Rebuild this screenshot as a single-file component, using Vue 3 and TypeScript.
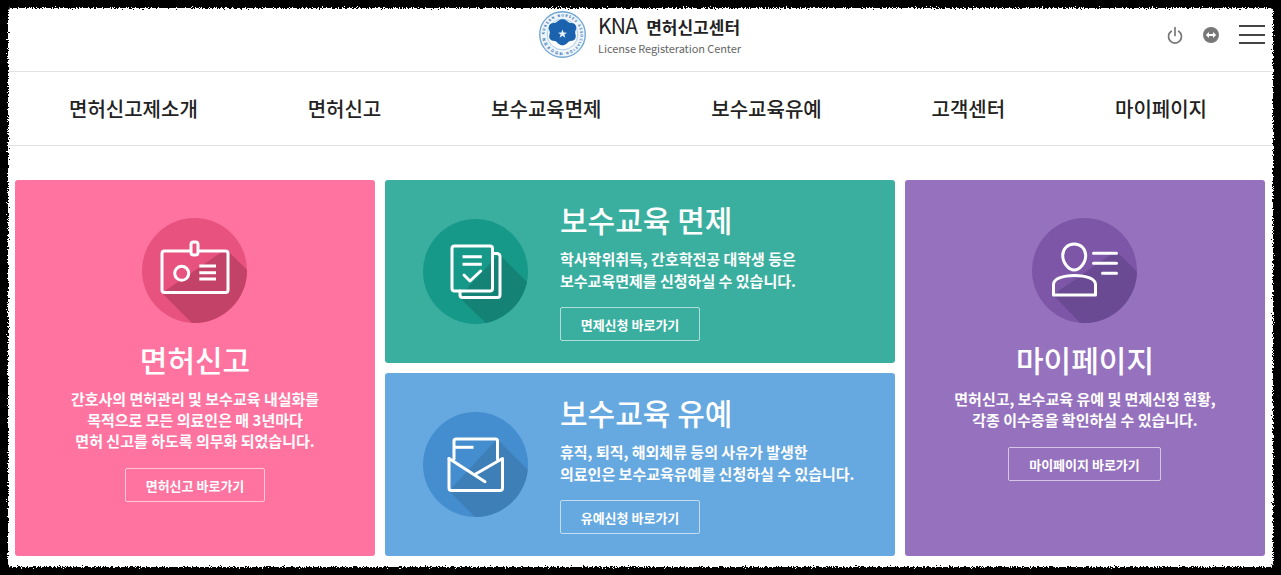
<script setup lang="ts">
const navItems: string[] = ['면허신고제소개', '면허신고', '보수교육면제', '보수교육유예', '고객센터', '마이페이지']
</script>

<template>
  <div class="screen">
    <svg class="defs" width="0" height="0" aria-hidden="true">
      <defs>
        <filter id="rough" x="-2%" y="-3%" width="104%" height="106%">
          <feTurbulence type="fractalNoise" baseFrequency="0.7" numOctaves="2" seed="4" result="n" />
          <feDisplacementMap in="SourceGraphic" in2="n" scale="6" xChannelSelector="R" yChannelSelector="G" />
        </filter>
      </defs>
    </svg>
    <div class="paper"></div>
    <div class="page">
      <header class="top">
        <div class="brand">
          <svg class="seal" width="47" height="47" viewBox="0 0 46 46">
            <defs>
              <path id="sealArc" d="M5.500 23a17.500 17.500 0 1 1 35 0a17.500 17.500 0 1 1-35 0" />
            </defs>
            <circle cx="23" cy="23" r="22.300" fill="#eef5fb" stroke="#6ea6d4" stroke-width="1.300" />
            <circle cx="23" cy="23" r="15" fill="#fff" stroke="#8bb7dc" stroke-width=".7" />
            <text class="seal-text"><textPath href="#sealArc" textLength="106">KOREAN NURSES ASSOCIATION 대한간호협회</textPath></text>
            <g transform="translate(23 22.500) scale(1.150) translate(-23 -23)">
              <path d="M23 10.500c3 0 4.600 2.400 5.600 2.800 1.700.7 4.700.3 5.800 2.600 1 2.200-.6 4.300-.6 5.700 0 1.500 1.300 3.700-.1 5.600-1.300 1.800-3.800 1.300-5.200 2.100-1.400.9-2.400 3.200-5.500 3.200s-4.100-2.300-5.500-3.200c-1.400-.8-3.900-.3-5.200-2.100-1.400-1.900-.1-4.100-.1-5.600 0-1.400-1.600-3.500-.6-5.700 1.100-2.300 4.100-1.900 5.800-2.600 1-.4 2.600-2.800 5.600-2.800z" fill="#1b63ae" />
            </g>
            <path d="M23 18l1.100 3.100 3.300.1-2.600 1.900 1 3.100-2.800-1.900-2.800 1.900 1-3.100-2.600-1.900 3.300-.1z" fill="#e9f1f9" />
          </svg>
          <div class="brand-text">
            <div class="brand-title"><span class="brand-en">KNA</span><span class="brand-ko">면허신고센터</span></div>
            <div class="brand-sub">License Registeration Center</div>
          </div>
        </div>
        <div class="tools">
          <svg width="16" height="18" viewBox="0 0 16 18" fill="none" stroke="#777" stroke-width="1.700" stroke-linecap="round">
            <path d="M8 1.500v8" />
            <path d="M4.300 5.200a6.500 6.500 0 1 0 7.400 0" />
          </svg>
          <svg width="16" height="16" viewBox="0 0 16 16">
            <circle cx="8" cy="8" r="8" fill="#777" />
            <path d="M2.800 8l3.200-3v2.100h4V5l3.200 3-3.200 3V8.900H6V11z" fill="#fff" />
          </svg>
          <div class="burger"><i></i><i></i><i></i></div>
        </div>
      </header>

      <nav class="menu">
        <a v-for="item in navItems" :key="item">{{ item }}</a>
      </nav>

      <main class="grid">
        <section class="card side pink">
          <svg class="badge" width="105" height="105" viewBox="0 0 105 105" fill="none">
            <clipPath id="c1"><circle cx="52.500" cy="52.500" r="52.500" /></clipPath>
            <circle cx="52.500" cy="52.500" r="52.500" fill="#e8527e" />
            <path clip-path="url(#c1)" d="M84 31l40 40-50 50H66L20 75z" fill="#c34267" />
            <g stroke="#fff" stroke-width="3">
              <rect x="20" y="33" width="66" height="41.500" rx="2.500" />
              <rect x="49" y="24" width="7" height="13" rx="2.500" fill="#e8527e" />
              <circle cx="39.700" cy="55.300" r="7" />
              <path d="M57.300 48H74M57.300 54.700H74M57.300 61H74" />
            </g>
          </svg>
          <h2>면허신고</h2>
          <p>간호사의 면허관리 및 보수교육 내실화를<br />목적으로 모든 의료인은 매 3년마다<br />면허 신고를 하도록 의무화 되었습니다.</p>
          <a class="btn">면허신고 바로가기</a>
        </section>

        <section class="card wide teal">
          <svg class="badge" width="105" height="105" viewBox="0 0 105 105" fill="none">
            <clipPath id="c2"><circle cx="52.500" cy="52.500" r="52.500" /></clipPath>
            <circle cx="52.500" cy="52.500" r="52.500" fill="#17998a" />
            <path clip-path="url(#c2)" d="M76 35l50 50-40 40H84L36 78z" fill="#148376" />
            <g stroke="#fff" stroke-width="3" stroke-linecap="round" stroke-linejoin="round">
              <rect x="29" y="27" width="40.500" height="45" rx="2.500" />
              <path d="M69.500 34.500H74a3 3 0 0 1 3 3V76a2.500 2.500 0 0 1-2.500 2.500H39.500A2.500 2.500 0 0 1 37 76v-4" />
              <path d="M39.500 37.700h19.300M39.500 45.300h19.300" stroke-linecap="butt" />
              <path d="M41 56l6 6 10.700-10" />
            </g>
          </svg>
          <div class="wide-body">
            <h2>보수교육 면제</h2>
            <p>학사학위취득, 간호학전공 대학생 등은<br />보수교육면제를 신청하실 수 있습니다.</p>
            <a class="btn">면제신청 바로가기</a>
          </div>
        </section>

        <section class="card side purple">
          <svg class="badge" width="105" height="105" viewBox="0 0 105 105" fill="none">
            <clipPath id="c3"><circle cx="52.500" cy="52.500" r="52.500" /></clipPath>
            <circle cx="52.500" cy="52.500" r="52.500" fill="#7d56a8" />
            <path clip-path="url(#c3)" d="M84 33l40 40-50 50H66L21 77z" fill="#6a4a92" />
            <g stroke="#fff" stroke-width="3" stroke-linecap="round" stroke-linejoin="round">
              <path d="M42.200 26c6.600 0 11.500 4.700 11.500 11.500 0 7.500-6 14.500-11.500 14.500s-11.500-7-11.500-14.500C30.700 30.700 35.600 26 42.200 26z" />
              <path d="M21.500 77V66.500c0-5.500 9-9 21-9s21 3.500 21 9V77z" />
              <path d="M61.500 35.300h23M61.500 45.300h23M70.500 55.300h14" />
            </g>
          </svg>
          <h2>마이페이지</h2>
          <p>면허신고, 보수교육 유예 및 면제신청 현황,<br />각종 이수증을 확인하실 수 있습니다.</p>
          <a class="btn btn-long">마이페이지 바로가기</a>
        </section>

        <section class="card wide blue">
          <svg class="badge" width="105" height="105" viewBox="0 0 105 105" fill="none">
            <clipPath id="c4"><circle cx="52.500" cy="52.500" r="52.500" /></clipPath>
            <circle cx="52.500" cy="52.500" r="52.500" fill="#448dce" />
            <path clip-path="url(#c4)" d="M74 27l50 50-48 48H72L26 79z" fill="#3f7fb8" />
            <g stroke="#fff" stroke-width="3" stroke-linecap="round" stroke-linejoin="round">
              <path d="M31 47V29a2 2 0 0 1 2-2h39.500a2 2 0 0 1 2 2v18" />
              <path d="M32 35.300h18.500" stroke-linecap="butt" />
              <path d="M26 46.500V76a2.500 2.500 0 0 0 2.500 2.500h48.500a2.500 2.500 0 0 0 2.500-2.500V46.500L52.700 62" />
              <path d="M26 46.500l36 23.200" />
            </g>
          </svg>
          <div class="wide-body">
            <h2>보수교육 유예</h2>
            <p>휴직, 퇴직, 해외체류 등의 사유가 발생한<br />의료인은 보수교육유예를 신청하실 수 있습니다.</p>
            <a class="btn">유예신청 바로가기</a>
          </div>
        </section>
      </main>
    </div>
  </div>
</template>

<style>
html, body { margin: 0; background: #000; }
</style>

<style scoped>
.screen {
  position: relative;
  width: 1281px;
  height: 575px;
  overflow: hidden;
  background: #000;
  font-family: "Noto Sans CJK KR", "Noto Sans", sans-serif;
}
.defs { position: absolute; }
.paper {
  position: absolute;
  left: 8px;
  top: 8px;
  width: 1265px;
  height: 559px;
  background: #fff;
  border-radius: 4px;
  filter: url(#rough);
}
.page {
  position: relative;
  padding: 8px 16px 0 15px;
}
.top {
  height: 63px;
  margin: 0 -8px 0 -7px;
  position: relative;
  display: flex;
  justify-content: center;
  align-items: center;
}
.brand {
  display: flex;
  align-items: center;
  gap: 12px;
  margin-top: -4px;
  margin-left: -2px;
}
.seal {
  flex: none;
  margin-left: 1px;
  margin-bottom: 6px;
}
.seal-text {
  font-size: 3.400px;
  font-weight: 700;
  fill: #2a6cb0;
}
.brand-text { margin-bottom: 7px; }
.brand-title {
  display: flex;
  align-items: baseline;
  gap: 9px;
  line-height: 24px;
  color: #222;
}
.brand-en {
  font-size: 21px;
  font-weight: 400;
  letter-spacing: -0.8px;
}
.brand-ko {
  font-size: 17px;
  font-weight: 600;
}
.brand-sub {
  margin-top: 1px;
  font-size: 11px;
  line-height: 16px;
  color: #666;
  letter-spacing: -0.08px;
}
.tools {
  position: absolute;
  right: 8px;
  top: 17px;
  display: flex;
  align-items: center;
  gap: 20px;
}
.burger {
  width: 26px;
  display: flex;
  flex-direction: column;
  gap: 6.500px;
}
.burger i {
  display: block;
  height: 2px;
  background: #444;
}
.menu {
  margin: 0 -8px 0 -7px;
  height: 73px;
  padding: 0 66px 0 61px;
  border-top: 1px solid #e2e2e2;
  border-bottom: 1px solid #e2e2e2;
  display: flex;
  justify-content: space-between;
  align-items: center;
}
.menu a {
  font-size: 20px;
  font-weight: 500;
  color: #222;
}
.grid {
  margin-top: 34px;
  display: grid;
  grid-template-columns: 360px 510px 360px;
  grid-template-rows: 183px 183px;
  gap: 10px;
  height: 376px;
}
.card {
  border-radius: 3px;
  color: #fff;
  box-sizing: border-box;
}
.side {
  grid-row: span 2;
  display: flex;
  flex-direction: column;
  align-items: center;
  text-align: center;
  padding-top: 38px;
}
.side .badge { margin-left: -1px; }
.wide {
  display: flex;
  padding: 0 0 0 38px;
  gap: 32px;
}
.wide .badge { margin-top: 39px; }
.wide-body { padding-top: 17px; }
.pink { background: #ff73a0; }
.teal { background: #3aafa0; }
.blue { background: #66a8e0; }
.purple { background: #9672be; }
.badge { display: block; flex: none; }
h2 {
  margin: 0;
  font-size: 30px;
  line-height: 44px;
  font-weight: 500;
}
.side h2 { margin-top: 14px; }
p {
  margin: 0;
  font-size: 15px;
  font-weight: 600;
}
.side p { margin-top: 7px; line-height: 21px; }
.wide p { margin-top: 7px; line-height: 22px; }
.btn {
  display: flex;
  align-items: center;
  justify-content: center;
  box-sizing: border-box;
  width: 140px;
  height: 34px;
  border: 1px solid rgba(255, 255, 255, 0.6);
  border-radius: 2px;
  font-size: 13px;
  font-weight: 700;
  color: #fff;
}
.side .btn { margin-top: 17px; }
.wide .btn { margin-top: 15px; }
.btn-long { width: 153px; margin-left: -1px; }
</style>
